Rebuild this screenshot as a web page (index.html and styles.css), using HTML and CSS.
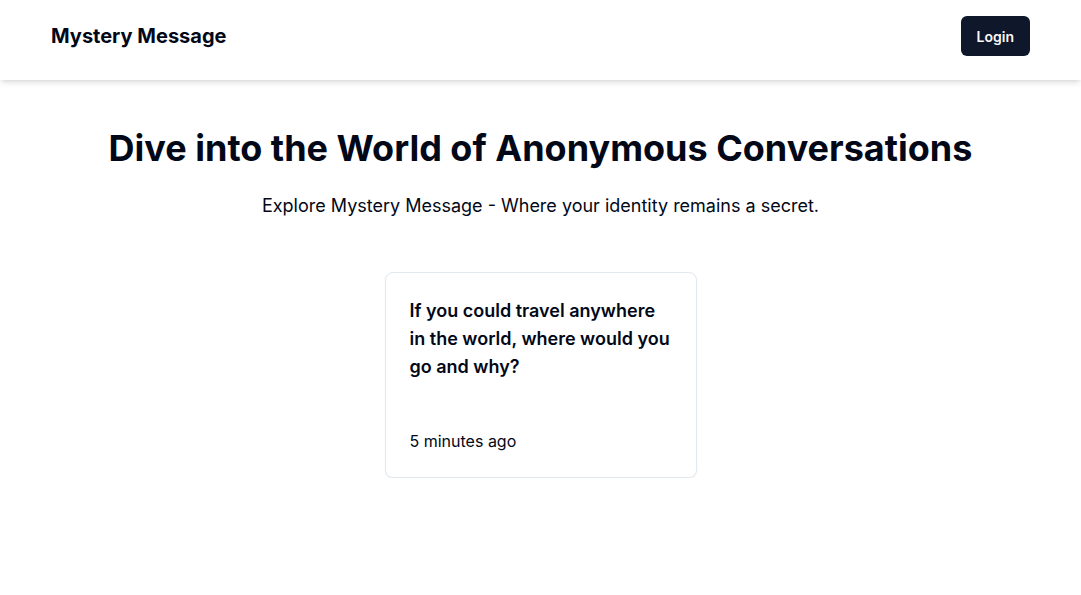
FILE: index.html
```html
<!DOCTYPE html>
<html lang="en">
<head>
<meta charset="utf-8">
<title>Mystery Message</title>
<link rel="stylesheet" href="styles.css">
</head>
<body>
<nav class="nav">
  <div class="nav-inner">
    <a class="brand" href="#">Mystery Message</a>
    <button class="btn">Login</button>
  </div>
</nav>
<main class="main">
  <section class="hero">
    <h1 class="title">Dive into the World of Anonymous Conversations</h1>
    <p class="subtitle">Explore Mystery Message - Where your identity remains a secret.</p>
  </section>
  <div class="card">
    <h3 class="card-title">If you could travel anywhere in the world, where would you go and why?</h3>
    <p class="card-time">5 minutes ago</p>
  </div>
</main>
</body>
</html>
```
FILE: styles.css
```css
* { box-sizing: border-box; }
html, body { margin: 0; padding: 0; }
body {
  font-family: Inter, "Noto Sans", sans-serif;
  color: #020817;
  background: #ffffff;
}
.nav {
  height: 80px;
  padding: 16px 51px 24px;
  background: #fff;
  box-shadow: 0 4px 6px -1px rgba(0,0,0,0.1), 0 2px 4px -2px rgba(0,0,0,0.1);
  position: relative;
}
.nav-inner {
  height: 40px;
  display: flex;
  align-items: center;
  justify-content: space-between;
}
.brand {
  font-size: 20px;
  line-height: 28px;
  font-weight: 700;
  color: #020817;
  text-decoration: none;
}
.btn {
  height: 40px;
  padding: 0 16px;
  border: 0;
  border-radius: 6px;
  background: #0f172a;
  color: #f8fafc;
  font-family: inherit;
  font-size: 14px;
  font-weight: 600;
  cursor: pointer;
}
.main {
  display: flex;
  flex-direction: column;
  align-items: center;
  padding-top: 48px;
}
.hero { text-align: center; }
.title {
  margin: 0;
  font-size: 36px;
  line-height: 40px;
  font-weight: 700;
}
.subtitle {
  margin: 24px 0 0;
  font-size: 18px;
  line-height: 28px;
}
.card {
  margin-top: 52px;
  width: 312px;
  border: 1px solid #e2e8f0;
  border-radius: 8px;
  padding: 24px;
  background: #fff;
  box-shadow: 0 1px 2px 0 rgba(0,0,0,0.05);
}
.card-title {
  margin: 0;
  font-size: 18px;
  line-height: 28px;
  font-weight: 600;
}
.card-time {
  margin: 48px 0 0;
  font-size: 16px;
  line-height: 24px;
}
```
